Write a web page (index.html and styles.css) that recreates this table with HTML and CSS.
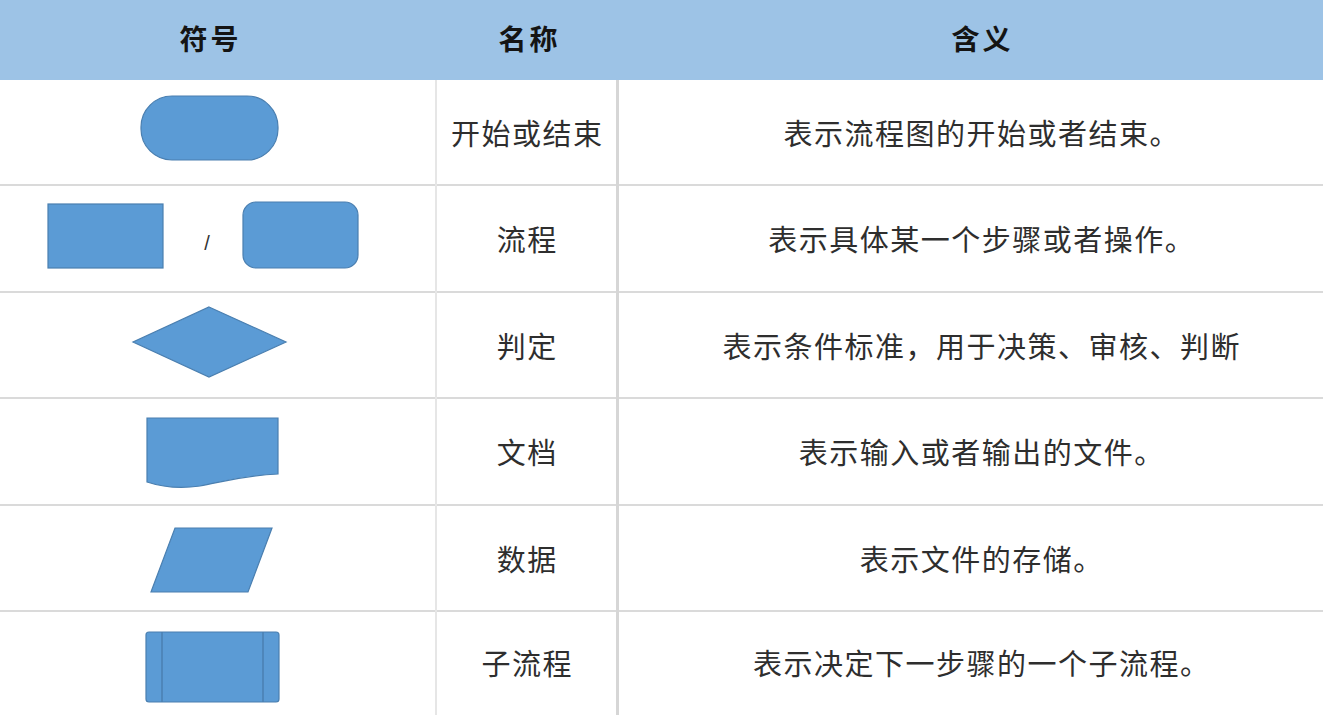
FILE: index.html
```html
<!DOCTYPE html>
<html lang="zh">
<head>
<meta charset="utf-8">
<link rel="stylesheet" href="styles.css">
</head>
<body>
<div class="table">
  <div class="row head">
    <div class="cell c1">符号</div>
    <div class="cell c2">名称</div>
    <div class="cell c3">含义</div>
  </div>
  <div class="row r-a">
    <div class="cell c1">
      <svg class="sym" viewBox="-19 80 456 106"><rect x="141" y="96" width="137" height="64" rx="31" ry="31" class="shape"/></svg>
    </div>
    <div class="cell c2 txt">开始或结束</div>
    <div class="cell c3 txt">表示流程图的开始或者结束。</div>
  </div>
  <div class="row r-b">
    <div class="cell c1">
      <svg class="sym" viewBox="-19 186 456 107">
        <rect x="48" y="204" width="115" height="64" class="shape"/>
        <text x="207" y="250" class="slash">/</text>
        <rect x="243" y="202" width="115" height="66" rx="13" ry="13" class="shape"/>
      </svg>
    </div>
    <div class="cell c2 txt">流程</div>
    <div class="cell c3 txt">表示具体某一个步骤或者操作。</div>
  </div>
  <div class="row r-a">
    <div class="cell c1">
      <svg class="sym" viewBox="-19 293 456 106"><polygon points="209,307 286,342 209,377 133,342" class="shape"/></svg>
    </div>
    <div class="cell c2 txt">判定</div>
    <div class="cell c3 txt">表示条件标准，用于决策、审核、判断</div>
  </div>
  <div class="row r-b">
    <div class="cell c1">
      <svg class="sym" viewBox="-19 399 456 107"><path d="M147 418 H278 V474 C240 476 222 482 200 486 C180 489 162 487 147 482 Z" class="shape"/></svg>
    </div>
    <div class="cell c2 txt">文档</div>
    <div class="cell c3 txt">表示输入或者输出的文件。</div>
  </div>
  <div class="row r-a">
    <div class="cell c1">
      <svg class="sym" viewBox="-19 506 456 106"><polygon points="175,528 272,528 248,592 151,592" class="shape"/></svg>
    </div>
    <div class="cell c2 txt">数据</div>
    <div class="cell c3 txt">表示文件的存储。</div>
  </div>
  <div class="row r-last">
    <div class="cell c1">
      <svg class="sym" viewBox="-19 612 456 103">
        <rect x="146" y="632" width="133" height="70" rx="3" ry="3" class="shape"/>
        <line x1="162" y1="632" x2="162" y2="702" class="inner"/>
        <line x1="263" y1="632" x2="263" y2="702" class="inner"/>
      </svg>
    </div>
    <div class="cell c2 txt">子流程</div>
    <div class="cell c3 txt">表示决定下一步骤的一个子流程。</div>
  </div>
</div>
</body>
</html>
```

FILE: styles.css
```css
html, body {
  margin: 0;
  padding: 0;
  background: #ffffff;
  overflow: hidden;
}
body {
  width: 1323px;
  height: 715px;
  font-family: "Noto Sans CJK SC", "Noto Sans", sans-serif;
  color: #2e2e2e;
}
.table {
  margin-left: -19px;
  width: 1362px;
  display: flex;
  flex-direction: column;
}
.row {
  display: grid;
  grid-template-columns: 456px 182px 724px;
  border-bottom: 2px solid #dadada;
  box-sizing: border-box;
}
.row.head {
  height: 80px;
  background: #9dc3e6;
  border-bottom: none;
  font-weight: bold;
  color: #141414;
}
.row.r-a { height: 106px; }
.row.r-b { height: 107px; }
.row.r-last { height: 103px; border-bottom: none; }
.cell {
  display: flex;
  align-items: center;
  justify-content: center;
  font-size: 29px;
  line-height: 1;
  white-space: nowrap;
  box-sizing: border-box;
}
.row.head .cell {
  font-size: 28px;
  letter-spacing: 3px;
  padding-left: 3px;
  padding-bottom: 4px;
}
.txt {
  letter-spacing: 1.5px;
  padding-left: 1.5px;
  padding-bottom: 2px;
}
.row:not(.head) .c1 { border-right: 2px solid #e6e6e6; }
.row:not(.head) .c2 { border-right: 3px solid #d6d6d6; }
.sym {
  display: block;
  width: 456px;
  height: 100%;
  margin-right: -2px;
}
.shape {
  fill: #5b9bd5;
  stroke: #4a7fb0;
  stroke-width: 1.2;
}
.inner {
  stroke: #4a7fb0;
  stroke-width: 1.5;
}
.slash {
  font-family: "Liberation Sans", sans-serif;
  font-size: 20px;
  fill: #333333;
  text-anchor: middle;
}
```
